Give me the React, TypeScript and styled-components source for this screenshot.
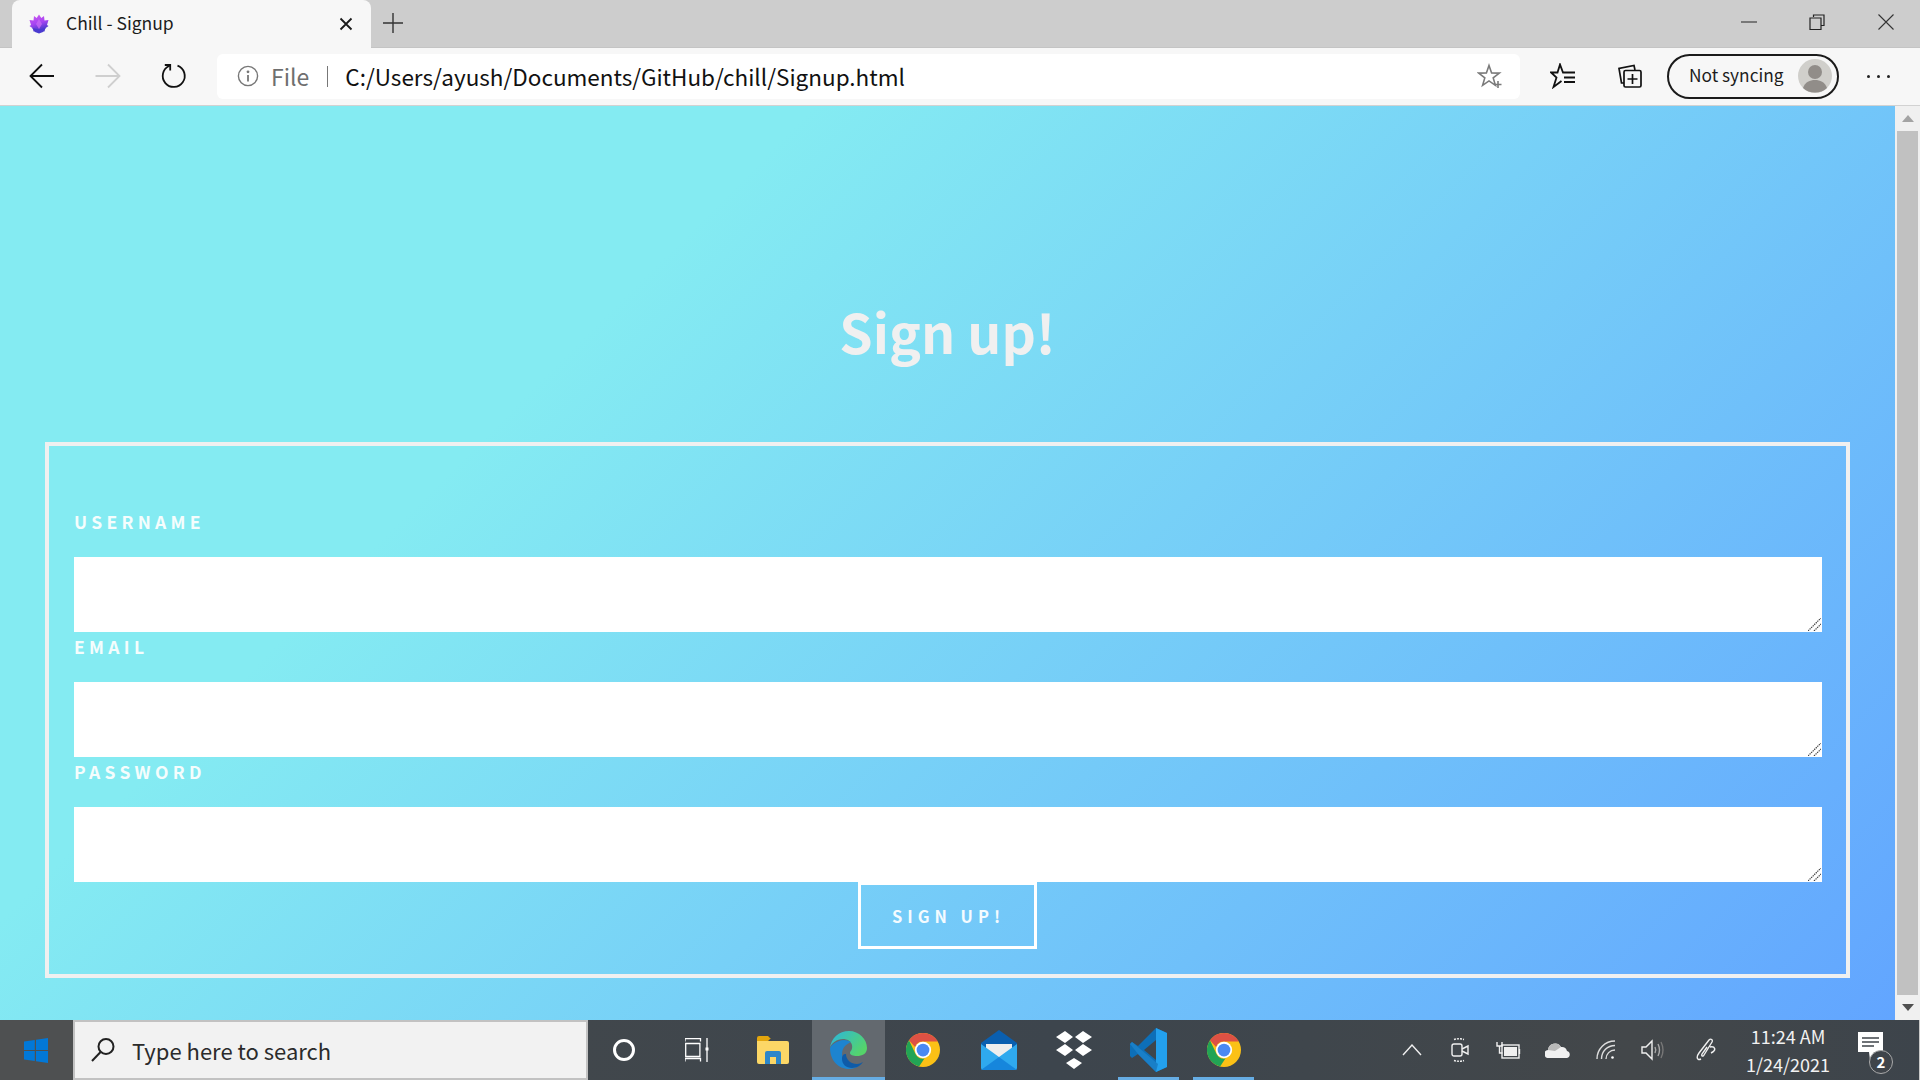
import React from "react";
import styled, { createGlobalStyle } from "styled-components";

const Global = createGlobalStyle`
  html, body { margin: 0; padding: 0; height: 100%; overflow: hidden; }
  * { box-sizing: border-box; }
`;

const UI = `"Noto Sans", "Open Sans", sans-serif`;
const SOURCE = `"Noto Sans CJK SC", "Noto Sans", sans-serif`;

const Shell = styled.div`
  width: 1920px; height: 1080px; display: flex; flex-direction: column; overflow: hidden;
  font-family: ${UI}; background: #f7f7f7;
`;
const TabStrip = styled.div`
  height: 48px; flex: none; display: flex; align-items: stretch; padding-left: 12px;
  background: #cdcdcd; box-shadow: inset 0 -1px 0 #c4c4c4;
`;
const Tab = styled.div`
  width: 359px; display: flex; align-items: center; padding: 0 18px 0 17px;
  background: #f7f7f7; border-radius: 8px 8px 0 0; color: #1c1c1c;
`;
const TabTitle = styled.span`
  flex: 1; margin: 0 0 2px 17px; font: 400 17.5px/24px ${SOURCE}; white-space: nowrap;
`;
const PlusSlot = styled.div`
  width: 44px; display: flex; align-items: center; justify-content: center; padding-bottom: 2px;
`;
const Spacer = styled.div`flex: 1;`;
const WinButton = styled.div<{ $w: number }>`
  width: ${(p) => p.$w}px; display: flex; align-items: center; justify-content: center; padding-bottom: 4px;
`;
const Toolbar = styled.div`
  height: 58px; flex: none; display: flex; align-items: center; padding: 0 9px 1px;
  background: #f7f7f7; border-bottom: 1px solid #d2d2d2;
`;
const ToolSlot = styled.div<{ $w?: number }>`
  width: ${(p) => p.$w ?? 66}px; flex: none; display: flex; align-items: center; justify-content: center;
`;
const AddressBar = styled.div`
  width: 1303px; height: 45px; margin: 0 9px 0 10px; flex: none; display: flex; align-items: center;
  padding: 0 17px 0 20px; background: #fff; border-radius: 6px;
`;
const FileLabel = styled.span`
  margin-left: 12px; font: 400 23px/30px ${SOURCE}; color: #6f6f6f;
`;
const Separator = styled.span`
  width: 1px; height: 21px; margin: 0 17px 0 18px; background: #777;
`;
const Url = styled.span`
  flex: 1; margin-bottom: 1px; font: 400 22.5px/30px ${SOURCE}; color: #111; white-space: nowrap;
`;
const Pill = styled.div`
  width: 172px; height: 45px; margin-left: 4px; flex: none; display: flex; align-items: center;
  justify-content: space-between; padding: 0 5px 2px 20px; border: 2px solid #1b1b1b; border-radius: 23px;
  font: 400 17.3px/24px ${SOURCE}; color: #1c1c1c;
`;
const AvatarBox = styled.span`
  display: flex; margin-bottom: -2px;
`;
const Dots = styled.div`
  display: flex; gap: 7px; margin-left: 12px;
`;
const Dot = styled.i`
  width: 3px; height: 3px; border-radius: 50%; background: #222;
`;
const Body = styled.div`
  flex: 1; min-height: 0; display: flex;
`;
const Page = styled.main`
  flex: 1; min-width: 0; padding: 0 45px; display: flex; flex-direction: column;
  background: linear-gradient(135deg, #84ebf2 29%, #62a5ff 100%);
`;
const Title = styled.h1`
  margin: 0; height: 336px; padding-top: 183px; text-align: center;
  font: 600 53.5px/84px ${SOURCE}; color: #f0f0f0;
`;
const Form = styled.form`
  height: 536px; display: flex; flex-direction: column; padding: 61px 24px 25px 25px;
  border: 4px solid #f0f0f0;
`;
const Label = styled.label`
  height: 50px; display: block; padding-top: 3px; font: 700 17.5px/24px ${SOURCE};
  letter-spacing: 4.3px; color: #f5fdfd;
`;
const FieldBox = styled.div`
  position: relative; height: 75px; background: #fff;
`;
const Grip = styled.svg`
  position: absolute; right: 1px; bottom: 1px; width: 13px; height: 13px;
`;
const SubmitRow = styled.div`
  display: flex; justify-content: center; padding-right: 1px;
`;
const SubmitButton = styled.button`
  width: 179px; height: 67px; padding: 0 0 0 2px; background: transparent; border: 3px solid #fff;
  font: 600 16.5px/24px ${SOURCE}; letter-spacing: 5px; color: #f4fbff;
`;
const Scrollbar = styled.div`
  width: 25px; flex: none; display: flex; flex-direction: column; align-items: center;
  background: #f0f0f0; padding: 0 2px 0 2px;
`;
const ScrollArrow = styled.div`
  height: 25px; flex: none; display: flex; align-items: center; justify-content: center;
`;
const ScrollThumb = styled.div`
  flex: 1; width: 21px; background: #c1c1c1;
`;
const Taskbar = styled.footer`
  height: 60px; flex: none; display: flex; align-items: stretch; color: #fff;
  background: linear-gradient(90deg, #4a4b4c 0, #41474c 30%, #3d454d 55%, #3f464c 68%, #43474a 85%, #3d444b 100%);
  border-right: 1px solid #c9c9c9;
`;
const StartButton = styled.div`
  width: 73px; display: flex; align-items: center; justify-content: center; background: #4e5051; padding-right: 2px;
`;
const SearchBox = styled.div`
  width: 515px; display: flex; align-items: center; padding: 0 0 0 15px; background: #f2f2f2;
  border: 2px solid #c2c2c2;
`;
const SearchText = styled.span`
  margin-left: 16px; font: 400 22px/30px ${SOURCE}; color: #2b2b2b;
`;
const TaskSlot = styled.div<{ $w?: number; $active?: boolean; $open?: boolean }>`
  position: relative; width: ${(p) => p.$w ?? 75}px; flex: none; display: flex; align-items: center; justify-content: center;
  background: ${(p) => (p.$active ? "#63696f" : "transparent")};
  &::after {
    content: ""; position: absolute; bottom: 0; height: 3px; background: #66ade4;
    left: ${(p) => (p.$active ? 0 : "7px")}; right: ${(p) => (p.$active ? 0 : "7px")};
    display: ${(p) => (p.$open || p.$active ? "block" : "none")};
  }
`;
const Tray = styled.div`
  flex: 1; display: flex; align-items: center; justify-content: flex-end; padding-right: 20px;
`;
const TraySlot = styled.div<{ $w: number; $shift?: number }>`
  width: ${(p) => p.$w}px; flex: none; display: flex; align-items: center; justify-content: center;
  padding-left: ${(p) => p.$shift ?? 0}px;
`;
const Clock = styled.div`
  width: 100px; margin-left: 6px; flex: none; text-align: center; font: 400 18px/28px ${SOURCE}; color: #f2f2f2;
`;
const NotifySlot = styled.div`
  position: relative; width: 61px; flex: none; align-self: stretch; display: flex; align-items: center;
  padding: 0 0 6px 20px;
`;
const Badge = styled.span`
  position: absolute; left: 31px; top: 30px; width: 24px; height: 24px; border: 1px solid #aaa; border-radius: 50%;
  background: #3f444a; font: 700 15px/22px ${SOURCE}; text-align: center; color: #fff;
`;

const Lotus = () => (
  <svg width="20" height="20" viewBox="0 0 20 20">
    <defs>
      <linearGradient id="lotusA" x1="0" y1="0" x2="0.3" y2="1">
        <stop offset="0" stopColor="#d05cf0" />
        <stop offset="0.55" stopColor="#a745f2" />
        <stop offset="1" stopColor="#4038c8" />
      </linearGradient>
    </defs>
    <path d="M10 .5l2.300 3.500L15 2l.5 4.500L19.500 6l-1.500 5 1.500 1-3.500 2.500-.5 3-3.500-.5-2 1.500-2-1.500-3.500.5-.5-3L.5 12 2 11 .5 6l4 .5L5 2l2.700 2z" fill="url(#lotusA)" />
    <path d="M10 5l3 5-3 5-3-5z" fill="#c768f4" opacity=".8" />
    <path d="M3 14l7 1.500 7-1.500-3 4-4 1.500L6 18z" fill="#4a3ad0" />
  </svg>
);
const Line = ({ d, w = 20, color = "#222", sw = 1.6, vb }: { d: string; w?: number; color?: string; sw?: number; vb?: string }) => (
  <svg width={w} height={w} viewBox={vb ?? `0 0 ${w} ${w}`} fill="none" stroke={color} strokeWidth={sw}>
    <path d={d} />
  </svg>
);
const InfoIcon = () => (
  <svg width="22" height="22" viewBox="0 0 22 22" fill="none" stroke="#777" strokeWidth="1.4">
    <circle cx="11" cy="11" r="9.600" />
    <path d="M11 10v6.500" strokeWidth="1.800" />
    <circle cx="11" cy="6.800" r="0.7" fill="#777" />
  </svg>
);
const StarAdd = () => (
  <svg width="26" height="26" viewBox="0 0 26 26" fill="none" stroke="#7a7a7a" strokeWidth="1.600">
    <path d="M12 2.500l2.600 7.400 7.800.2-6.200 4.800 2.200 7.400-6.400-4.400-6.400 4.400 2.200-7.400-6.200-4.800 7.800-.2z" />
    <path d="M21 18v7M17.500 21.500h7" />
  </svg>
);
const Favorites = () => (
  <svg width="26" height="26" viewBox="0 0 26 26" fill="none" stroke="#111" strokeWidth="1.800">
    <path d="M25 9.500H13L10 1.500 7.500 9.500H1l5.500 5L3.500 24l8-6" />
    <path d="M14 14.500h11M14 19h11" />
  </svg>
);
const Collections = () => (
  <svg width="26" height="26" viewBox="0 0 26 26" fill="none" stroke="#111" strokeWidth="1.700">
    <path d="M7 20H4.500L2 5.500 17 2.500l1 4.500" />
    <rect x="7" y="7.500" width="17" height="16.500" rx="1.500" fill="#f7f7f7" />
    <path d="M15.500 11v10M10.500 16h10" />
  </svg>
);
const Avatar = () => (
  <svg width="34" height="34" viewBox="0 0 34 34">
    <circle cx="17" cy="17" r="17" fill="#d0cfcb" />
    <circle cx="17" cy="13" r="7" fill="#918d89" />
    <path d="M5 29c2-6 7-8 12-8s10 2 12 8c-6 6-18 6-24 0z" fill="#918d89" />
  </svg>
);
const WinLogo = () => (
  <svg width="24" height="25" viewBox="0 0 24 25" fill="#0278d7">
    <path d="M0 3.600L10.800 2v10H0zM12 1.800L24 0v12H12zM0 13h10.800v10L0 21.400zM12 13h12v12l-12-1.800z" />
  </svg>
);
const SearchIcon = () => (
  <svg width="26" height="26" viewBox="0 0 26 26" fill="none" stroke="#222" strokeWidth="2">
    <circle cx="16" cy="9.500" r="7.500" />
    <path d="M10.600 15L2 24" />
  </svg>
);
const TaskViewIcon = () => (
  <svg width="24" height="24" viewBox="0 0 24 24" fill="none" stroke="#fff" strokeWidth="1.300">
    <path d="M0 3.500V.7h15.500v2.800M.7 5.500h14.200v13H.7zM0 23.500v-3h15.500v3M22 0v24" />
    <rect x="20.500" y="9.500" width="3" height="3" fill="#fff" stroke="none" />
  </svg>
);
const FolderIcon = () => (
  <svg width="32" height="28" viewBox="0 0 32 28">
    <path d="M0 2a2 2 0 0 1 2-2h9l3 3h-1l-3 3H0z" fill="#e3a60d" />
    <path d="M0 5h30a2 2 0 0 1 2 2v19a2 2 0 0 1-2 2H2a2 2 0 0 1-2-2z" fill="#fcd766" />
    <path d="M8 28V17a2 2 0 0 1 2-2h12a2 2 0 0 1 2 2v11h-5v-7h-6v7z" fill="#2d87c9" />
  </svg>
);
const EdgeIcon = () => (
  <svg width="37" height="38" viewBox="0 0 37 38">
    <defs>
      <linearGradient id="edgeA" x1="0" y1="0" x2="1" y2="0.6">
        <stop offset="0" stopColor="#2bb5e0" />
        <stop offset="1" stopColor="#55d46a" />
      </linearGradient>
    </defs>
    <path d="M0 17C1 7 9 0 19 0c10 0 18 8 18 17 0 6-5 8-10 8-4 0-7-1-7-3 0-2 3-3 2-8-1-4-5-6-9-6C7 8 1 12 0 17z" fill="url(#edgeA)" />
    <path d="M0 17c0 12 8 21 19 21 4 0 9-2 12-5-6 2-11 1-15-2-5-4-5-12-1-16 2-2 4-3 6-4-3-2-8-3-12-1C4 12 1 14 0 17z" fill="#1d84d0" />
    <path d="M16 23c0 6 5 10 11 10 2 0 4-1 6-2-2 3-6 6-11 6-6 0-10-4-10-9 0-3 1-5 4-5z" fill="#0f5ba8" />
  </svg>
);
const ChromeIcon = ({ w = 34 }: { w?: number }) => (
  <svg width={w} height={w} viewBox="0 0 48 48">
    <circle cx="24" cy="24" r="24" fill="#fbc116" />
    <path d="M24 0a24 24 0 0 1 20.800 12H24a12 12 0 0 0-11.200 7.600L4.200 10.400A24 24 0 0 1 24 0z" fill="#dd5144" />
    <path d="M4.200 10.400L13.600 30l.4.600A12 12 0 0 0 26 36l-7.500 11.400A24 24 0 0 1 4.200 10.400z" fill="#22a455" />
    <circle cx="24" cy="24" r="11.500" fill="#fff" />
    <circle cx="24" cy="24" r="9" fill="#4a89f3" />
  </svg>
);
const MailIcon = () => (
  <svg width="36" height="40" viewBox="0 0 36 40">
    <path d="M0 13L18 0l18 13v8H0z" fill="#0a5fb0" />
    <path d="M5 14h26v16H5z" fill="#eee" />
    <path d="M0 14l18 13 18-13v24a2 2 0 0 1-2 2H2a2 2 0 0 1-2-2z" fill="#2fa9ee" />
    <path d="M0 40l18-13 18 13z" fill="#1686dc" />
  </svg>
);
const DropboxIcon = () => (
  <svg width="36" height="38" viewBox="0 0 36 38" fill="#fff">
    <path d="M9 0l8 6-8 6-9-6zM27 0l9 6-9 6-8-6zM9 13l8 6-8 6-9-6zM27 13l9 6-9 6-8-6zM18 27l8 5-8 6-8-6z" />
  </svg>
);
const VSCodeIcon = () => (
  <svg width="37" height="44" viewBox="0 0 37 44">
    <path d="M26 0l11 5v34l-11 5L8 26l-6 4-2-2v-12l2-2 6 4z" fill="#0d6fb8" />
    <path d="M26 0l11 5v34l-11 5z" fill="#23a0ed" />
    <path d="M26 12L14 22l12 10z" fill="#3e454b" />
    <path d="M0 16l2-2 26 22-2 8-18-18z" fill="#1a80c8" opacity=".95" />
  </svg>
);
const TrayStroke = styled.svg`
  fill: none; stroke: #f0f0f0; stroke-width: 1.400;
`;
const Cloud = () => (
  <svg width="25" height="16" viewBox="0 0 25 16">
    <path d="M4 16a4 4 0 0 1-1-8 7 7 0 0 1 13-3 5.500 5.500 0 0 1 6 4 3.600 3.600 0 0 1 0 7z" fill="#f1f1f1" />
    <path d="M3 8a7 7 0 0 1 13-3L10 9z" fill="#b9b9b9" />
  </svg>
);
const NotifyIcon = () => (
  <svg width="25" height="30" viewBox="0 0 25 30">
    <path d="M0 0h25v20h-9l-4 8-1-8H0z" fill="#fff" />
    <path d="M4 6h17M4 10h17M4 14h12" stroke="#3f444a" strokeWidth="1.400" />
  </svg>
);

const GripMark = () => (
  <Grip viewBox="0 0 13 13" fill="none" stroke="#444" strokeWidth="1.200" strokeDasharray="1.400 .8">
    <path d="M0 13L13 0M6 13l7-7" />
  </Grip>
);

const fields = ["USERNAME", "EMAIL", "PASSWORD"];

export default function App() {
  return (
    <Shell>
      <Global />
      <TabStrip>
        <Tab>
          <Lotus />
          <TabTitle>Chill - Signup</TabTitle>
          <Line w={14} d="M1.500 1.500l11 11M12.500 1.500l-11 11" color="#1a1a1a" sw={1.800} />
        </Tab>
        <PlusSlot>
          <Line w={20} d="M10 0v20M0 10h20" color="#333" sw={1.400} />
        </PlusSlot>
        <Spacer />
        <WinButton $w={67}><Line w={16} d="M0 8h16" color="#333" sw={1.100} /></WinButton>
        <WinButton $w={70}>
          <Line w={16} d="M4.500 3V1H15v10.500h-2.500M1 4h11v11.500H1z" color="#222" sw={1.200} />
        </WinButton>
        <WinButton $w={68}><Line w={16} d="M.5.5l15 15M15.500.5l-15 15" color="#333" sw={1.100} /></WinButton>
      </TabStrip>
      <Toolbar>
        <ToolSlot><Line w={26} d="M1.500 13H25M13 1.500L1.500 13 13 24.500" color="#111" sw={1.800} /></ToolSlot>
        <ToolSlot><Line w={26} d="M.5 13H24M13 1.500L24.500 13 13 24.500" color="#cfcfcf" sw={1.800} /></ToolSlot>
        <ToolSlot>
          <Line w={28} d="M9 4A11 11 0 1 0 17.500 3.600M4.800 3h5.400v5.400" color="#111" sw={1.800} />
        </ToolSlot>
        <AddressBar>
          <InfoIcon />
          <FileLabel>File</FileLabel>
          <Separator />
          <Url>C:/Users/ayush/Documents/GitHub/chill/Signup.html</Url>
          <StarAdd />
        </AddressBar>
        <ToolSlot $w={67}><Favorites /></ToolSlot>
        <ToolSlot $w={67}><Collections /></ToolSlot>
        <Pill>Not syncing<AvatarBox><Avatar /></AvatarBox></Pill>
        <ToolSlot $w={66}><Dots><Dot /><Dot /><Dot /></Dots></ToolSlot>
      </Toolbar>
      <Body>
        <Page>
          <Title>Sign up!</Title>
          <Form onSubmit={(e) => e.preventDefault()}>
            {fields.map((f) => (
              <React.Fragment key={f}>
                <Label>{f}</Label>
                <FieldBox><GripMark /></FieldBox>
              </React.Fragment>
            ))}
            <SubmitRow><SubmitButton>SIGN UP!</SubmitButton></SubmitRow>
          </Form>
        </Page>
        <Scrollbar>
          <ScrollArrow><svg width="12" height="7"><path d="M6 0l6 7H0z" fill="#a3a3a3" /></svg></ScrollArrow>
          <ScrollThumb />
          <ScrollArrow><svg width="12" height="7"><path d="M0 0h12L6 7z" fill="#505050" /></svg></ScrollArrow>
        </Scrollbar>
      </Body>
      <Taskbar>
        <StartButton><WinLogo /></StartButton>
        <SearchBox><SearchIcon /><SearchText>Type here to search</SearchText></SearchBox>
        <TaskSlot $w={72}>
          <svg width="24" height="24" fill="none" stroke="#fff" strokeWidth="3"><circle cx="12" cy="12" r="9.500" /></svg>
        </TaskSlot>
        <TaskSlot $w={74}><TaskViewIcon /></TaskSlot>
        <TaskSlot $w={78}><FolderIcon /></TaskSlot>
        <TaskSlot $w={73} $active><EdgeIcon /></TaskSlot>
        <TaskSlot $w={76}><ChromeIcon /></TaskSlot>
        <TaskSlot $w={76}><MailIcon /></TaskSlot>
        <TaskSlot $w={74}><DropboxIcon /></TaskSlot>
        <TaskSlot $w={75} $open><VSCodeIcon /></TaskSlot>
        <TaskSlot $w={75} $open><ChromeIcon /></TaskSlot>
        <Tray>
          <TraySlot $w={46}>
            <TrayStroke width="20" height="12" viewBox="0 0 20 12"><path d="M1 11l9-10 9 10" /></TrayStroke>
          </TraySlot>
          <TraySlot $w={49}>
            <TrayStroke width="18" height="24" viewBox="0 0 18 24">
              <path d="M3 1.500c3-1 7-1 10 0M3 22.500c3 1 7 1 10 0" strokeDasharray="2 1" />
              <rect x="1" y="6" width="10" height="12" rx="2" />
              <path d="M11 11l6-3v8l-6-3" />
            </TrayStroke>
          </TraySlot>
          <TraySlot $w={48}>
            <TrayStroke width="25" height="20" viewBox="0 0 25 20">
              <rect x="6" y="5" width="17" height="13" />
              <rect x="8" y="7" width="13" height="9" fill="#f0f0f0" stroke="none" />
              <path d="M23.500 9v5M1 2v4h5V2M3.500 6v7h3" />
            </TrayStroke>
          </TraySlot>
          <TraySlot $w={50}><Cloud /></TraySlot>
          <TraySlot $w={47}>
            <TrayStroke width="20" height="20" viewBox="0 0 20 20" strokeWidth="1.200">
              <path d="M1 19C1 9 9 1 19 1M5.500 19c0-8 6-13.500 13.500-13.500M10 19c0-5 4-9 9-9" stroke="#ddd" />
              <circle cx="16.500" cy="17.500" r="1.300" fill="#fff" stroke="none" />
            </TrayStroke>
          </TraySlot>
          <TraySlot $w={46}>
            <TrayStroke width="23" height="22" viewBox="0 0 23 22">
              <path d="M1 8h4l6-6v18l-6-6H1z" />
              <path d="M14 8c1 2 1 4 0 6M17 5c2 4 2 8 0 12" stroke="#aaa" />
              <path d="M20 3c2.500 5 2.500 11 0 16" stroke="#777" />
            </TrayStroke>
          </TraySlot>
          <TraySlot $w={57} $shift={6}>
            <TrayStroke width="21" height="24" viewBox="0 0 21 24">
              <path d="M5 21C1 23 0 19 3 15L13 2c2-2 4 0 3 2L8 17c-1 2-3 1-2-1l5-7M14 9c5-1 7 3 1 6" />
            </TrayStroke>
          </TraySlot>
          <Clock>11:24 AM<br />1/24/2021</Clock>
          <NotifySlot><NotifyIcon /><Badge>2</Badge></NotifySlot>
        </Tray>
      </Taskbar>
    </Shell>
  );
}
